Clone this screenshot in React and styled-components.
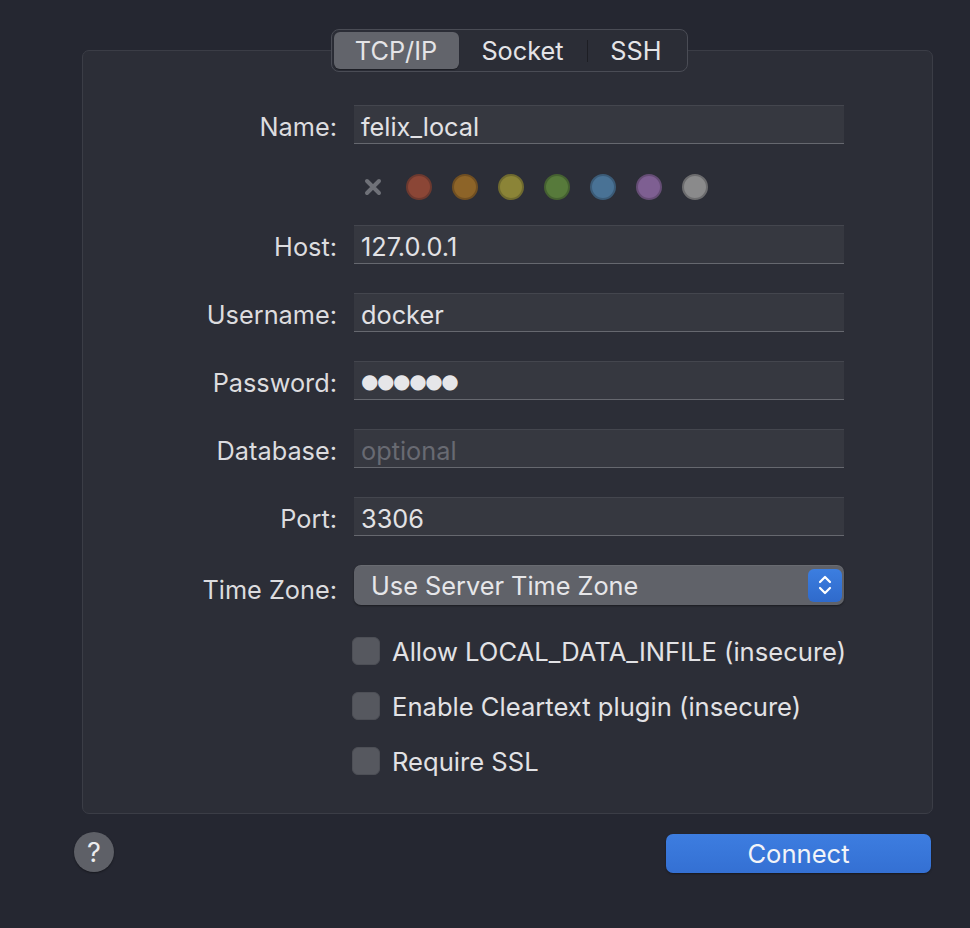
import React from "react";
import styled, { createGlobalStyle } from "styled-components";

const Global = createGlobalStyle`
  html, body { margin: 0; padding: 0; background: #252731; }
  body { font-family: Inter, "Noto Sans", "Liberation Sans", sans-serif; color: #dfdfe2; }
`;

const Page = styled.div`
  width: 970px;
  height: 928px;
  box-sizing: border-box;
  padding: 29px 37px 0 74px;
  display: flex;
  flex-direction: column;
`;

const Frame = styled.div`
  margin-left: 8px;
  width: 851px;
  display: flex;
  flex-direction: column;
  align-items: center;
`;

const Tabs = styled.div`
  position: relative;
  z-index: 1;
  display: flex;
  align-items: center;
  height: 43px;
  box-sizing: border-box;
  padding: 2px;
  border: 1px solid #4a4c55;
  border-radius: 8px;
  background: #2b2d36;
  margin-bottom: -22px;
  margin-left: 3px;
`;

const Tab = styled.div`
  width: ${(p) => p.$w}px;
  height: 37px;
  display: flex;
  align-items: center;
  justify-content: center;
  font-size: 25.3px;
  color: #e4e4e7;
  border-radius: 6px;
  background: ${(p) => (p.$active ? "#62646b" : "transparent")};
  box-shadow: ${(p) => (p.$active ? "0 1px 1px rgba(0,0,0,0.35)" : "none")};
`;

const TabDivider = styled.div`
  width: 1px;
  height: 22px;
  background: #1d1e24;
`;

const Panel = styled.div`
  width: 100%;
  height: 764px;
  box-sizing: border-box;
  border: 1px solid #3b3d46;
  border-radius: 7px;
  background: #2c2e37;
  padding: 54px 0 0 0;
`;

const Form = styled.div`
  display: grid;
  grid-template-columns: 254px 490px;
  column-gap: 17px;
  align-items: center;
`;

const Label = styled.div`
  grid-column: 1;
  text-align: right;
  font-size: 25.3px;
  color: #dcdcdf;
  height: 39px;
  line-height: ${(p) => 43 + (p.$shift || 0)}px;
  margin-top: ${(p) => p.$mt || 0}px;
  white-space: nowrap;
`;

const Field = styled.div`
  grid-column: 2;
  height: 39px;
  box-sizing: border-box;
  background: #363840;
  border-top: 1px solid #44464e;
  border-bottom: 1px solid #66686f;
  display: flex;
  align-items: center;
  padding: 4px 7px 0;
  font-size: 25.3px;
  color: ${(p) => (p.$placeholder ? "#686a72" : "#e2e2e5")};
  margin-top: ${(p) => p.$mt || 0}px;
`;

const Dots = styled.span`
  font-size: 20px;
  letter-spacing: -1.4px;
  font-family: "DejaVu Sans", sans-serif;
  color: #e6e6e9;
  margin-top: -3px;
`;

const Colors = styled.div`
  grid-column: 2;
  display: flex;
  align-items: center;
  height: 26px;
  margin-top: 30px;
  margin-bottom: 25px;
  padding-left: 6px;
  gap: 20px;
`;

const ClearMark = styled.div`
  width: 26px;
  height: 26px;
  display: flex;
  align-items: center;
  justify-content: center;
`;

const Swatch = styled.div`
  width: 26px;
  height: 26px;
  box-sizing: border-box;
  border-radius: 50%;
  background: ${(p) => p.$c};
  border: 2px solid ${(p) => p.$b};
`;

const Select = styled.div`
  grid-column: 2;
  margin-top: 29px;
  height: 40px;
  box-sizing: border-box;
  border-radius: 7px;
  background: #606269;
  box-shadow: 0 1px 2px rgba(0, 0, 0, 0.4), inset 0 1px 0 rgba(255,255,255,0.06);
  display: flex;
  align-items: center;
  justify-content: space-between;
  padding: 0 2px 0 17px;
  font-size: 25.3px;
  color: #e6e6e9;
`;

const Stepper = styled.div`
  width: 34px;
  height: 33px;
  border-radius: 6px;
  background: linear-gradient(#3c7ee0, #2f6acb);
  display: flex;
  align-items: center;
  justify-content: center;
`;

const Checks = styled.div`
  grid-column: 2;
  display: flex;
  flex-direction: column;
  gap: 27px;
  margin-top: 32px;
  margin-left: -2px;
`;

const CheckRow = styled.div`
  display: flex;
  align-items: center;
  gap: 12px;
  height: 28px;
  font-size: 25.6px;
  color: #e2e2e5;
  white-space: nowrap;
`;

const Box = styled.div`
  width: 28px;
  height: 28px;
  box-sizing: border-box;
  border-radius: 6px;
  background: #56585f;
  border: 1px solid #4d4f56;
  flex: none;
`;

const Footer = styled.div`
  display: flex;
  justify-content: space-between;
  align-items: center;
  margin-top: 17px;
  width: 857px;
`;

const Help = styled.div`
  width: 40px;
  height: 40px;
  border-radius: 50%;
  background: #5e6067;
  color: #ececee;
  display: flex;
  align-items: center;
  justify-content: center;
  font-size: 27px;
  box-shadow: 0 1px 2px rgba(0,0,0,0.4);
`;

const Connect = styled.div`
  width: 265px;
  height: 39px;
  border-radius: 7px;
  background: linear-gradient(#3d7de0, #3470d3);
  color: #f2f4f8;
  display: flex;
  align-items: center;
  justify-content: center;
  font-size: 25.6px;
  box-shadow: 0 1px 2px rgba(0,0,0,0.4);
  margin-top: 3px;
`;

const swatches = [
  ["#8b4636", "#6c392f"],
  ["#8d6428", "#704f22"],
  ["#8b8437", "#6f6a2f"],
  ["#577a3b", "#456131"],
  ["#497295", "#3b5b77"],
  ["#7e5f92", "#654d75"],
  ["#8a8a8b", "#6c6c6e"],
];

const fields = [
  ["Host:", "127.0.0.1"],
  ["Username:", "docker"],
  ["Password:", null],
  ["Database:", "optional", true],
  ["Port:", "3306"],
];

export default function App() {
  return (
    <>
      <Global />
      <Page>
        <Frame>
          <Tabs>
            <Tab $w={125} $active>TCP/IP</Tab>
            <Tab $w={128}>Socket</Tab>
            <TabDivider />
            <Tab $w={97}>SSH</Tab>
          </Tabs>
          <Panel>
            <Form>
              <Label>Name:</Label>
              <Field>felix_local</Field>
              <Colors>
                <ClearMark>
                  <svg width="18" height="18" viewBox="0 0 18 18">
                    <path d="M3 3 L15 15 M15 3 L3 15" stroke="#6f7178" strokeWidth="4" strokeLinecap="round" />
                  </svg>
                </ClearMark>
                {swatches.map(([c, b]) => (
                  <Swatch key={c} $c={c} $b={b} />
                ))}
              </Colors>
              {fields.map(([label, value, ph], i) => (
                <React.Fragment key={label}>
                  <Label $mt={i === 0 ? 0 : 29}>{label}</Label>
                  <Field $mt={i === 0 ? 0 : 29} $placeholder={ph}>
                    {value === null ? <Dots>●●●●●●</Dots> : value}
                  </Field>
                </React.Fragment>
              ))}
              <Label $mt={29} $shift={4}>Time Zone:</Label>
              <Select>
                Use Server Time Zone
                <Stepper>
                  <svg width="16" height="24" viewBox="0 0 16 24">
                    <path d="M3 9 L8 4 L13 9 M3 15 L8 20 L13 15" fill="none" stroke="#ffffff" strokeWidth="2.2" strokeLinecap="round" strokeLinejoin="round" />
                  </svg>
                </Stepper>
              </Select>
              <Checks>
                <CheckRow><Box />Allow LOCAL_DATA_INFILE (insecure)</CheckRow>
                <CheckRow><Box />Enable Cleartext plugin (insecure)</CheckRow>
                <CheckRow><Box />Require SSL</CheckRow>
              </Checks>
            </Form>
          </Panel>
        </Frame>
        <Footer>
          <Help>?</Help>
          <Connect>Connect</Connect>
        </Footer>
      </Page>
    </>
  );
}
